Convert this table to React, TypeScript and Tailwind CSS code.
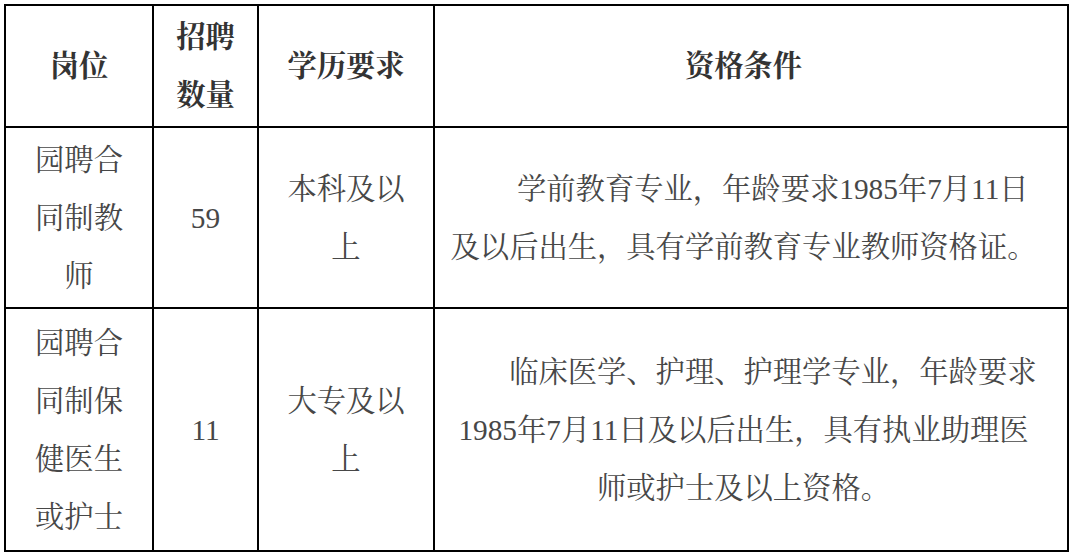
import React from "react";

const font = {
  fontFamily:
    '"Liberation Serif", "Noto Serif CJK SC", "Noto Sans CJK SC", serif',
};

function Cell({
  children,
  className = "",
}: {
  children: React.ReactNode;
  className?: string;
}) {
  return (
    <div
      className={
        "bg-white flex items-center justify-center text-center " + className
      }
    >
      {children}
    </div>
  );
}

export default function App() {
  return (
    <div className="bg-white w-[1076px] h-[556px] p-[4px]" style={font}>
      <div className="w-[1065px] grid grid-cols-[146px_103px_174px_632px] grid-rows-[120px_179px_241px] gap-[2px] p-[2px] bg-black text-[29.3px] leading-[58px] text-[#474747]">
        {/* header */}
        <Cell className="px-[18px] font-bold text-[#333]">
          <div>岗位</div>
        </Cell>
        <Cell className="px-[12px] font-bold text-[#333]">
          <div>招聘数量</div>
        </Cell>
        <Cell className="px-[20px] font-bold text-[#333]">
          <div>学历要求</div>
        </Cell>
        <Cell className="pl-[12px] pr-[27px] font-bold text-[#333]">
          <div>资格条件</div>
        </Cell>

        {/* row 1 */}
        <Cell className="px-[18px]">
          <div>园聘合同制教师</div>
        </Cell>
        <Cell className="px-[12px]">
          <div>59</div>
        </Cell>
        <Cell className="px-[20px]">
          <div>本科及以上</div>
        </Cell>
        <Cell className="pl-[12px] pr-[27px]">
          <div className="indent-[2em] w-full">
            学前教育专业，年龄要求1985年7月11日及以后出生，具有学前教育专业教师资格证。
          </div>
        </Cell>

        {/* row 2 */}
        <Cell className="px-[18px]">
          <div>园聘合同制保健医生或护士</div>
        </Cell>
        <Cell className="px-[12px]">
          <div>11</div>
        </Cell>
        <Cell className="px-[20px]">
          <div>大专及以上</div>
        </Cell>
        <Cell className="pl-[12px] pr-[27px]">
          <div className="indent-[2em] w-full">
            临床医学、护理、护理学专业，年龄要求1985年7月11日及以后出生，具有执业助理医师或护士及以上资格。
          </div>
        </Cell>
      </div>
    </div>
  );
}
